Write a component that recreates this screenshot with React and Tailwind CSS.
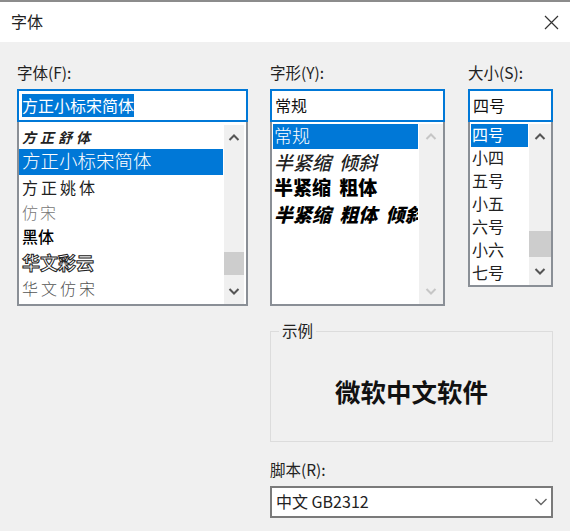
const FONT = "font-['Noto_Sans_CJK_SC','Liberation_Sans',sans-serif]";

function Chevron({ up, className = "" }) {
  return (
    <svg width="14" height="8" viewBox="0 0 14 8" className={className} fill="none" stroke="currentColor" strokeWidth="2">
      <path d={up ? "M2.5 7 L7 2.5 L11.5 7" : "M2.5 1 L7 5.5 L11.5 1"} />
    </svg>
  );
}

function Scrollbar({ w, thumbTop, thumbH, disabled, arrowH = 24 }) {
  const color = disabled ? "text-[#c6c6c6]" : "text-[#555555]";
  return (
    <div className={`${w} h-full bg-[#f0f0f0] flex flex-col shrink-0 ${color}`}>
      <div className="h-[24px] flex items-center justify-center shrink-0"><Chevron up /></div>
      <div className="flex-1 flex flex-col">
        {thumbH ? <div style={{ marginTop: thumbTop, height: thumbH }} className="bg-[#cdcdcd] w-full" /> : null}
      </div>
      <div className="flex items-center justify-center shrink-0" style={{ height: arrowH }}><Chevron /></div>
    </div>
  );
}

function Input({ children, selected }) {
  return (
    <div className="h-[33px] border-2 border-[#0078d7] bg-white flex items-center px-[3px] pb-[2px] text-[16px] leading-none text-[#111]">
      {selected ? <span className="bg-[#0078d7] text-white h-[23px] flex items-center pb-[2px] mt-[2px]">{children}</span> : children}
    </div>
  );
}

const fontRows = [
  { t: "方正舒体", h: "h-[24px]", c: "text-[14px] font-bold italic tracking-[4px] text-[#222]" },
  { t: "方正小标宋简体", h: "h-[26px] pb-[4px]", c: "text-[18.5px] font-light text-white bg-[#0078d7]" },
  { t: "方正姚体", h: "h-[26px] pb-[2px]", c: "text-[16px] tracking-[3px] text-[#222]" },
  { t: "仿宋", h: "h-[25px] pb-[4px]", c: "text-[16px] font-light tracking-[2px] text-[#777]" },
  { t: "黑体", h: "h-[25px] pb-[5px]", c: "text-[16px] font-medium text-black" },
  { t: "华文彩云", h: "h-[26px] pb-[4px]", c: "text-[18px] font-bold text-white [-webkit-text-stroke:1px_#222]" },
  { t: "华文仿宋", h: "h-[26px] pb-[4px]", c: "text-[16px] font-light tracking-[3px] text-[#555]" },
];

const styleRows = [
  { t: "常规", h: "h-[25px] pb-[3px]", c: "text-[18px] font-light text-white bg-[#0078d7]" },
  { t: "半紧缩 倾斜", h: "h-[26px] pb-[2px]", c: "text-[19px] italic font-medium text-[#222] [word-spacing:4px]" },
  { t: "半紧缩 粗体", h: "h-[25px] pb-[3px]", c: "text-[19px] font-black text-black [word-spacing:4px]" },
  { t: "半紧缩 粗体 倾斜", h: "h-[26px] overflow-hidden", c: "text-[19px] italic font-black text-black whitespace-nowrap [word-spacing:4px]" },
];

const sizeRows = ["四号", "小四", "五号", "小五", "六号", "小六", "七号"];

export default function App() {
  return (
    <div className={`${FONT} w-[570px] h-[531px] bg-[#f0f0f0] border-t-2 border-[#8c8c8c] flex flex-col overflow-hidden text-[#222]`}>
      <div className="h-[40px] bg-white flex items-center justify-between pl-[11px] pr-[11px] shrink-0">
        <span className="text-[16px] pb-[2px]">字体</span>
        <svg width="15" height="15" viewBox="0 0 15 15" fill="none" stroke="#333" strokeWidth="1.2">
          <path d="M1 1 L14 14 M14 1 L1 14" />
        </svg>
      </div>

      <div className="flex pl-[17px] pt-[22px] gap-[22px]">
        {/* Font */}
        <div className="w-[231px] flex flex-col">
          <div className="h-[25px] text-[15.5px] leading-[16px]">字体(F):</div>
          <Input selected>方正小标宋简体</Input>
          <div className="h-[184px] border-2 border-t-0 border-[#8a8f96] bg-white flex pt-[3px]">
            <div className="flex-1 flex flex-col whitespace-nowrap overflow-hidden">
              {fontRows.map((r) => (
                <div key={r.t} className={`${r.h} ${r.c} flex items-center px-[3px] leading-none shrink-0`}>{r.t}</div>
              ))}
            </div>
            <Scrollbar w="w-[20px] ml-[1px] mr-[2px]" thumbTop={103} thumbH={23} />
          </div>
        </div>

        {/* Style */}
        <div className="w-[175px] flex flex-col">
          <div className="h-[25px] text-[15.5px] leading-[16px]">字形(Y):</div>
          <Input>常规</Input>
          <div className="h-[184px] border-2 border-t-0 border-[#8a8f96] bg-white flex pt-[2px]">
            <div className="flex-1 min-w-0 flex flex-col pl-[1px] pr-[1px]">
              {styleRows.map((r) => (
                <div key={r.t} className={`${r.h} ${r.c} flex items-center px-[1px] leading-none shrink-0`}>{r.t}</div>
              ))}
            </div>
            <Scrollbar w="w-[24px]" disabled />
          </div>
        </div>

        {/* Size */}
        <div className="w-[85px] ml-[1px] flex flex-col">
          <div className="h-[25px] text-[15.5px] leading-[16px] whitespace-nowrap">大小(S):</div>
          <Input>四号</Input>
          <div className="h-[165px] border-2 border-t-0 border-[#8a8f96] bg-white flex pt-[2px]">
            <div className="flex-1 min-w-0 flex flex-col pl-[1px] pr-[1px]">
              {sizeRows.map((s, i) => (
                <div key={s} className={`h-[23px] pb-[4px] flex items-center px-[1px] text-[16px] leading-none shrink-0 ${i === 0 ? "bg-[#0078d7] text-white" : "text-[#222]"}`}>{s}</div>
              ))}
            </div>
            <Scrollbar w="w-[22px]" thumbTop={83} thumbH={26} arrowH={27} />
          </div>
        </div>
      </div>

      <div className="ml-[270px] w-[283px] mt-[25px] relative">
        <span className="absolute left-[9px] top-[-11px] px-[3px] bg-[#f0f0f0] text-[15.5px] leading-[20px]">示例</span>
        <div className="h-[111px] border border-[#dcdcdc] flex items-center justify-center">
          <span className="text-[25.5px] font-bold text-[#111] leading-none mt-[8px]">微软中文软件</span>
        </div>
      </div>

      <div className="ml-[270px] w-[283px] mt-[19px] flex flex-col">
        <div className="h-[25px] text-[15.5px] leading-[16px]">脚本(R):</div>
        <div className="h-[32px] border-2 border-[#7a7a7a] bg-white flex items-center justify-between pl-[4px] pr-[3px] pb-[2px] text-[16px] text-[#222]">
          <span>中文 GB2312</span>
          <svg width="14" height="8" viewBox="0 0 14 8" className="text-[#666] mt-[2px]" fill="none" stroke="currentColor" strokeWidth="1.4">
            <path d="M1.5 1 L7 6.5 L12.5 1" />
          </svg>
        </div>
      </div>
    </div>
  );
}
